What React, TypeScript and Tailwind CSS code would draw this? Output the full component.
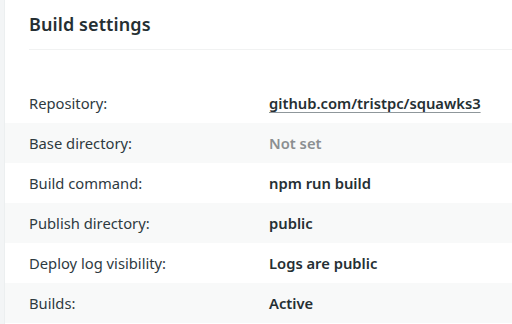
import React from "react";

const rows = [
  { label: "Repository:", value: "github.com/tristpc/squawks3", link: true },
  { label: "Base directory:", value: "Not set", muted: true },
  { label: "Build command:", value: "npm run build" },
  { label: "Publish directory:", value: "public" },
  { label: "Deploy log visibility:", value: "Logs are public" },
  { label: "Builds:", value: "Active" },
];

export default function App() {
  return (
    <div
      className="w-[512px] h-[324px] overflow-hidden bg-white flex text-[#2e3a3f]"
      style={{ fontFamily: '"Noto Sans", "Open Sans", sans-serif' }}
    >
      {/* left rail */}
      <div className="w-[5px] shrink-0 bg-[#f3f5f6] border-r border-[#eceff0]" />

      <div className="flex-1 flex flex-col">
        {/* header */}
        <div className="ml-6 h-[50px] flex items-center border-b border-[#f1f2f2]">
          <h2 className="text-[18px] font-semibold tracking-[0.1px] text-[#252f33]">
            Build settings
          </h2>
        </div>

        {/* settings table */}
        <div className="mt-[33px] flex flex-col">
          {rows.map((row, i) => (
            <div
              key={row.label}
              className={`h-10 flex items-center pl-6 text-[14.75px] ${
                i % 2 === 1 ? "bg-[#f8f9f9]" : "bg-white"
              }`}
            >
              <span className="w-[240px] shrink-0">{row.label}</span>
              <span
                className={`font-semibold ${
                  row.muted ? "text-[#8b8f91]" : "text-[#252f33]"
                } ${
                  row.link
                    ? "underline decoration-[#8f979b] underline-offset-[3px] [text-decoration-skip-ink:none]"
                    : ""
                }`}
              >
                {row.value}
              </span>
            </div>
          ))}
        </div>
      </div>
    </div>
  );
}
